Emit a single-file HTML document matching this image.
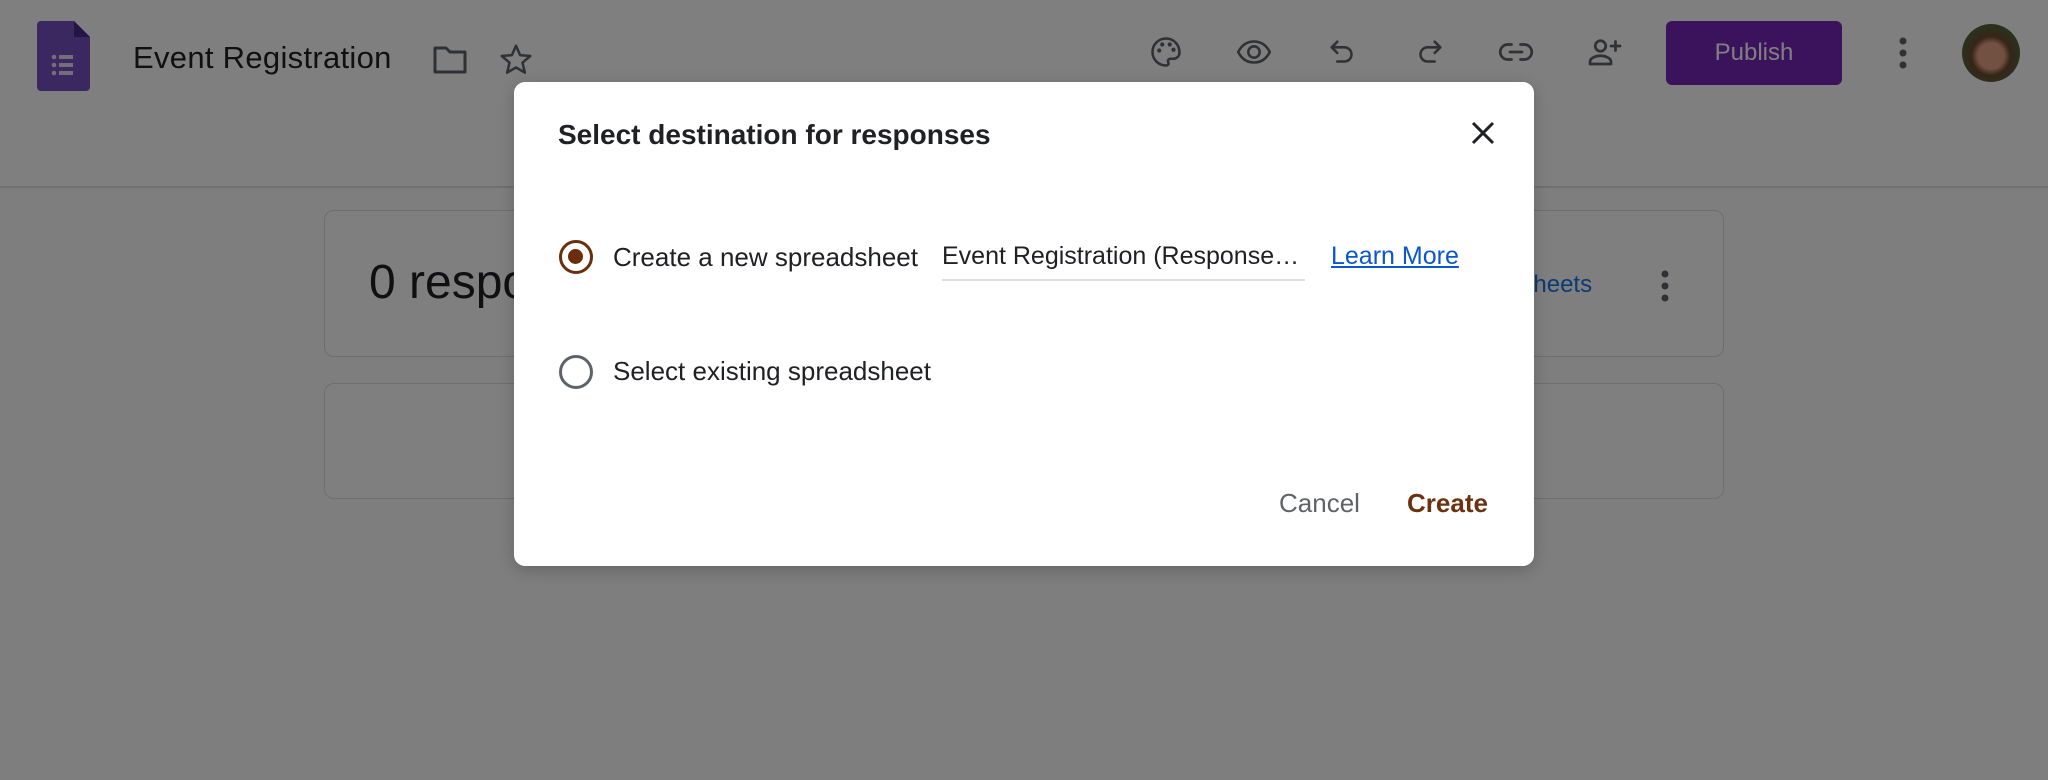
<!DOCTYPE html>
<html><head><meta charset="utf-8"><style>
*{margin:0;padding:0;box-sizing:border-box}
body{width:2048px;height:780px;position:relative;overflow:hidden;background:#fdfdfd;font-family:"Liberation Sans",Arial,sans-serif}
.hdr{position:absolute;left:0;top:0;width:2048px;height:188px;background:#fff;border-bottom:2px solid #e0e0e0}
.ab{position:absolute}
.card{position:absolute;left:324px;width:1400px;background:#fff;border:1.5px solid #dadce0;border-radius:10px}
.ov{position:absolute;left:0;top:0;width:2048px;height:780px;background:rgba(0,0,0,.5)}
.dlg{position:absolute;left:514px;top:82px;width:1020px;height:484px;background:#fff;border-radius:11px;box-shadow:0 4px 16px rgba(0,0,0,.2)}
.t{position:absolute;white-space:nowrap;color:#202124}
.radio{position:absolute;width:34px;height:34px;border-radius:50%}
svg.i{position:absolute;fill:none;stroke:#5f6368;stroke-width:2.4;stroke-linecap:round;stroke-linejoin:round}
</style></head><body>
<div class="hdr">
 <svg class="ab" style="left:37px;top:21px" width="53" height="70" viewBox="0 0 53 70">
  <path d="M4 0H37L53 16V66a4 4 0 0 1-4 4H4a4 4 0 0 1-4-4V4a4 4 0 0 1 4-4z" fill="#7650c0"/>
  <path d="M37 0V16H53z" fill="#4a2a8a"/>
  <g fill="#e6dcf5"><circle cx="17" cy="36" r="2.3"/><circle cx="17" cy="44" r="2.3"/><circle cx="17" cy="52" r="2.3"/>
  <rect x="22" y="34" width="14" height="4"/><rect x="22" y="42" width="14" height="4"/><rect x="22" y="50" width="14" height="4"/></g>
 </svg>
 <div class="t" style="left:133px;top:40px;font-size:31px;letter-spacing:0.3px">Event Registration</div>
 <svg class="i" style="left:432px;top:44px" width="36" height="32" viewBox="0 0 36 32"><path d="M3 4h11l4 4h15v20H3z" stroke-width="3"/></svg>
 <svg class="i" style="left:497px;top:41px" width="38" height="38" viewBox="0 0 24 24"><path d="M12 3l2.6 5.9 6.4.6-4.9 4.2 1.5 6.3L12 16.7 6.4 20l1.5-6.3L3 9.5l6.4-.6z" stroke-width="1.6"/></svg>
 <svg class="i" style="left:1148px;top:34px" width="36" height="36" viewBox="0 0 24 24"><path d="M12 3a9 9 0 0 0 0 18c1.5 0 2-1 1.5-2-.6-1.2.2-2.5 1.5-2.5H17a4 4 0 0 0 4-4C21 7 17 3 12 3z" stroke-width="1.7"/><g fill="#5f6368" stroke="none"><circle cx="7.5" cy="11" r="1.4"/><circle cx="9.5" cy="7" r="1.4"/><circle cx="14.5" cy="7" r="1.4"/><circle cx="17" cy="10.5" r="1.4"/></g></svg>
 <svg class="i" style="left:1234px;top:34px" width="40" height="36" viewBox="0 0 24 24"><path d="M1.5 12C4 7 8 5 12 5s8 2 10.5 7C20 17 16 19 12 19s-8-2-10.5-7z" stroke-width="1.7"/><circle cx="12" cy="12" r="3.8" stroke-width="1.7"/></svg>
 <svg class="i" style="left:1326px;top:35px" width="34" height="36" viewBox="0 0 24 24"><path d="M8 4L4 8l4 4M4 8h9a5 5 0 0 1 0 10H8" stroke-width="1.8"/></svg>
 <svg class="i" style="left:1412px;top:35px" width="34" height="36" viewBox="0 0 24 24"><path d="M16 4l4 4-4 4M20 8h-9a5 5 0 0 0 0 10h5" stroke-width="1.8"/></svg>
 <svg class="i" style="left:1497px;top:34px" width="38" height="36" viewBox="0 0 24 24"><path d="M9 7H6.5a5 5 0 0 0 0 10H9M15 7h2.5a5 5 0 0 1 0 10H15M8 12h8" stroke-width="1.8"/></svg>
 <svg class="i" style="left:1585px;top:34px" width="40" height="36" viewBox="0 0 24 24"><circle cx="9" cy="8" r="3.5" stroke-width="1.8"/><path d="M2 20v-1.5c0-2.5 4-4 7-4s7 1.5 7 4V20zM19 5v6M16 8h6" stroke-width="1.8"/></svg>
 <div class="ab" style="left:1666px;top:21px;width:176px;height:64px;background:#7627bb;border-radius:6px;color:#fff;font-size:24px;text-align:center;line-height:64px">Publish</div>
 <svg class="ab" style="left:1896px;top:36px" width="14" height="34"><g fill="#5f6368"><circle cx="7" cy="5" r="3.5"/><circle cx="7" cy="17" r="3.5"/><circle cx="7" cy="29" r="3.5"/></g></svg>
 <div class="ab" style="left:1962px;top:24px;width:58px;height:58px;border-radius:50%;background:radial-gradient(circle at 50% 55%,#e4a386 0 30%,#6e4a33 45%,#4d6b3a 75%)"></div>
</div>
<div class="card" style="top:210px;height:147px">
 <div class="t" style="left:44px;top:44px;font-size:48px">0 responses</div>
 <div class="t" style="left:1115px;top:60px;font-size:24px;color:#1a73e8">Link to Sheets</div>
 <svg class="ab" style="left:1333px;top:58px" width="14" height="34"><g fill="#5f6368"><circle cx="7" cy="5" r="3.5"/><circle cx="7" cy="17" r="3.5"/><circle cx="7" cy="29" r="3.5"/></g></svg>
</div>
<div class="card" style="top:383px;height:116px"></div>
<div class="ov"></div>
<div class="dlg">
 <div class="t" style="left:44px;top:37px;font-size:28px;font-weight:bold;color:#202124">Select destination for responses</div>
 <svg class="ab" style="left:956px;top:38px" width="26" height="26" viewBox="0 0 26 26"><path d="M3 3L23 23M23 3L3 23" stroke="#202124" stroke-width="3"/></svg>
 <div class="radio" style="left:45px;top:158px;border:3.5px solid #6b2e0c"><div style="position:absolute;left:6px;top:6px;width:15px;height:15px;border-radius:50%;background:#6b2e0c"></div></div>
 <div class="t" style="left:99px;top:160px;font-size:26px">Create a new spreadsheet</div>
 <div class="t" style="left:428px;top:160px;width:363px;height:39px;font-size:25px;border-bottom:2px solid #e0e0e0;overflow:hidden">Event Registration (Response…</div>
 <div class="t" style="left:817px;top:160px;font-size:25px;color:#0b57d0;text-decoration:underline">Learn More</div>
 <div class="radio" style="left:45px;top:273px;border:3.5px solid #5f6368"></div>
 <div class="t" style="left:99px;top:274px;font-size:26px">Select existing spreadsheet</div>
 <div class="t" style="left:765px;top:406px;font-size:26px;color:#5f6368">Cancel</div>
 <div class="t" style="left:893px;top:406px;font-size:26px;font-weight:bold;color:#6b3210">Create</div>
</div>
</body></html>
